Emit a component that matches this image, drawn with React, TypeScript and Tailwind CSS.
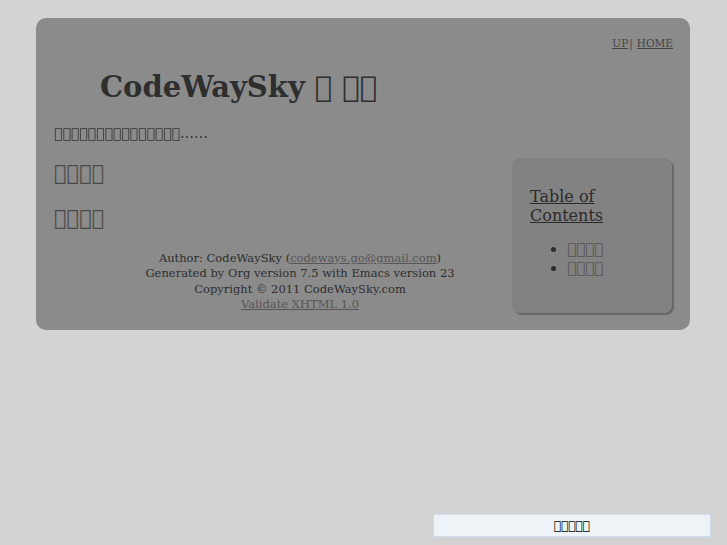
import React from "react";

const T = (n: number) => "\uE000".repeat(n);

export default function App() {
  return (
    <div className="min-h-screen bg-[#d3d3d3] pt-[18px] pl-[36px]" style={{ fontFamily: '"DejaVu Serif", serif' }}>
      <div className="w-[654px] rounded-[10px] bg-[#8b8b8b] pb-[17px] pl-[18px] pr-[18px] text-[#2b2b2b]">
        <div className="mr-[-1px] flex justify-end pt-[19px] text-[10.5px] leading-[12px] text-[#444]">
          <a className="underline">UP</a>
          <span className="ml-[1px] mr-[4px]">|</span>
          <a className="underline">HOME</a>
        </div>
        <h1 className="pl-[46px] pt-[21px] text-[29px] font-bold leading-[34px] text-[#2e2e2e]">
          CodeWaySky {T(1)} {T(2)}
        </h1>
        <p className="mt-[21px] text-[14px] leading-[17px] text-[#333] will-change-transform">
          {T(15)}……
        </p>
        <div className="mt-[16px] flex">
          <div className="min-w-0 flex-1">
            <h2 className="mt-[2px] text-[21px] leading-[26px] text-[#4a4a4a]">
              <a className="underline">{T(4)}</a>
            </h2>
            <h2 className="mt-[19px] text-[21px] leading-[26px] text-[#4a4a4a]">
              <a className="underline">{T(4)}</a>
            </h2>
            <div className="mt-[20px] w-[492px] text-center text-[11.5px] leading-[15.33px] text-[#2e2e2e]">
              <div>
                Author: CodeWaySky (<a className="text-[#555] underline">codeways.go@gmail.com</a>)
              </div>
              <div>Generated by Org version 7.5 with Emacs version 23</div>
              <div>Copyright © 2011 CodeWaySky.com</div>
              <div>
                <a className="text-[#555] underline">Validate XHTML 1.0</a>
              </div>
            </div>
          </div>
          <div className="h-[155px] w-[160px] shrink-0 rounded-[8px] bg-[#828282] pl-[18px] pr-[18px] pt-[29px] shadow-[2px_2px_1px_#666]">
            <h2 className="text-[16px] leading-[19px] text-[#2b2b2b] underline">Table of Contents</h2>
            <ul className="mt-[15px] list-disc pl-[37px] text-[15px] leading-[19px] text-[#2b2b2b]">
              <li>
                <a className="text-[#555]">{T(4)}</a>
              </li>
              <li>
                <a className="text-[#555]">{T(4)}</a>
              </li>
            </ul>
          </div>
        </div>
      </div>
      <div className="fixed bottom-[8px] right-[16px] flex h-[23px] w-[278px] items-center justify-center border border-[#cfdceb] bg-[#eef3f7] text-[12px] text-black" style={{ fontFamily: '"DejaVu Sans", sans-serif' }}>
        {T(5)}
      </div>
    </div>
  );
}
